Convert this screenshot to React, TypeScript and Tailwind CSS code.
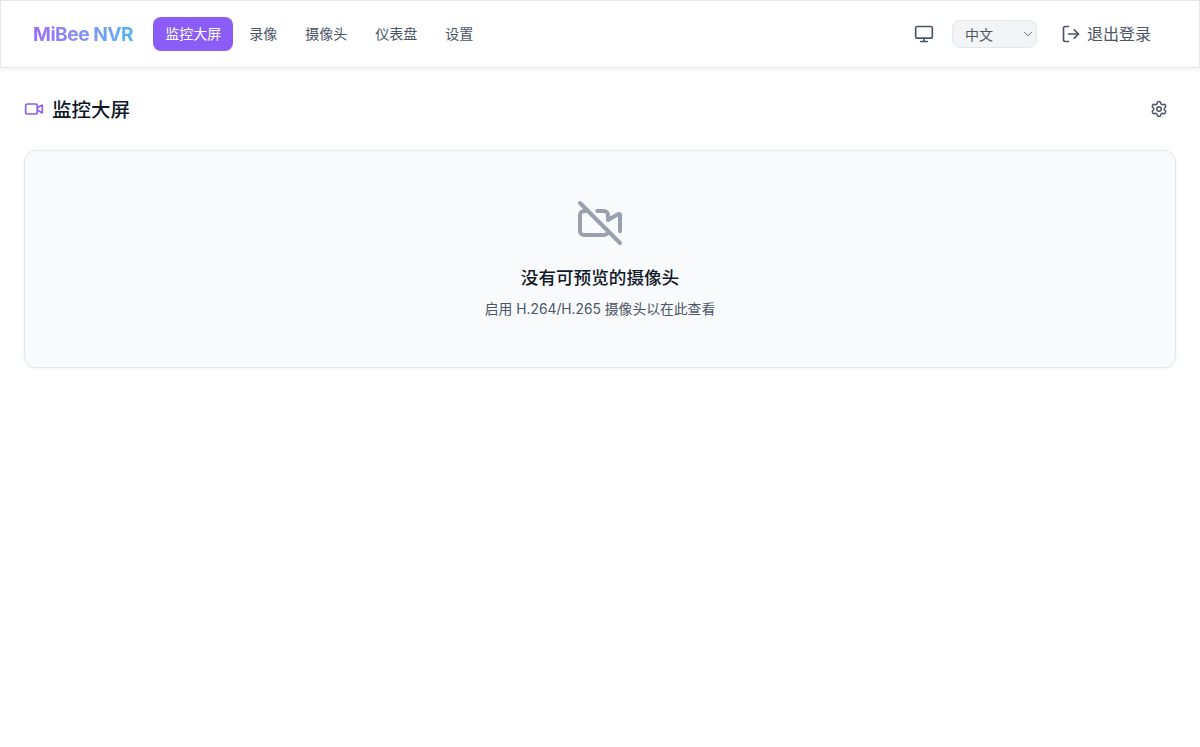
import { ChevronDown, LogOut, Monitor, Settings, Video, VideoOff } from "lucide-react"

const navItems = ["监控大屏", "录像", "摄像头", "仪表盘", "设置"]

export default function App() {
  return (
    <div className="min-h-screen bg-white font-['Inter','Noto_Sans_CJK_SC',sans-serif] text-gray-900">
      {/* Top bar */}
      <header className="flex h-[68px] items-center justify-between border border-gray-200 bg-white pl-8 pr-[48px] shadow-[0_2px_6px_rgba(0,0,0,0.05)]">
        <div className="flex items-center">
          <span className="mr-5 bg-gradient-to-r from-[#9b6cf8] to-[#4fb3f6] bg-clip-text pt-px text-[19.2px] font-bold tracking-[-0.5px] text-transparent">
            MiBee NVR
          </span>
          <nav className="flex items-center gap-1">
            {navItems.map((item, i) => (
              <button
                key={item}
                className={
                  i === 0
                    ? "h-[34px] rounded-lg bg-[#8b5cf6] px-3 text-sm text-white"
                    : "h-[34px] rounded-lg px-3 text-sm text-gray-600"
                }
              >
                {item}
              </button>
            ))}
          </nav>
        </div>

        <div className="flex items-center">
          <Monitor className="mr-[18px] h-5 w-5 text-gray-600" />
          <div className="relative mr-6">
            <select className="h-[28px] w-[85px] appearance-none rounded-lg border border-gray-200 bg-gray-100 pl-3 pt-px text-sm text-gray-600">
              <option>中文</option>
              <option>English</option>
            </select>
            <ChevronDown className="pointer-events-none absolute right-[2px] top-[7px] h-[14px] w-[14px] text-gray-600" strokeWidth={1.5} />
          </div>
          <button className="flex items-center gap-1.5 text-base text-gray-600">
            <LogOut className="h-5 w-5" />
            退出登录
          </button>
        </div>
      </header>

      <main className="px-6">
        {/* Page title */}
        <div className="flex h-[82px] items-center justify-between pt-1">
          <h1 className="flex items-center gap-2 text-[19.5px] font-medium">
            <Video className="mb-1 h-5 w-5 text-[#8b5cf6]" />
            监控大屏
          </h1>
          <button className="mb-1 mr-2 text-gray-600">
            <Settings className="h-[18px] w-[18px]" />
          </button>
        </div>

        {/* Empty state */}
        <div className="flex h-[218px] flex-col items-center rounded-xl border border-gray-200 bg-gray-50 pt-[48px] shadow-[0_1px_3px_rgba(0,0,0,0.05)]">
          <VideoOff className="h-12 w-12 text-gray-400" />
          <h2 className="mt-[18px] text-[17.6px] font-medium">没有可预览的摄像头</h2>
          <p className="mt-2 text-[13.8px] text-gray-600">启用 H.264/H.265 摄像头以在此查看</p>
        </div>
      </main>
    </div>
  )
}
